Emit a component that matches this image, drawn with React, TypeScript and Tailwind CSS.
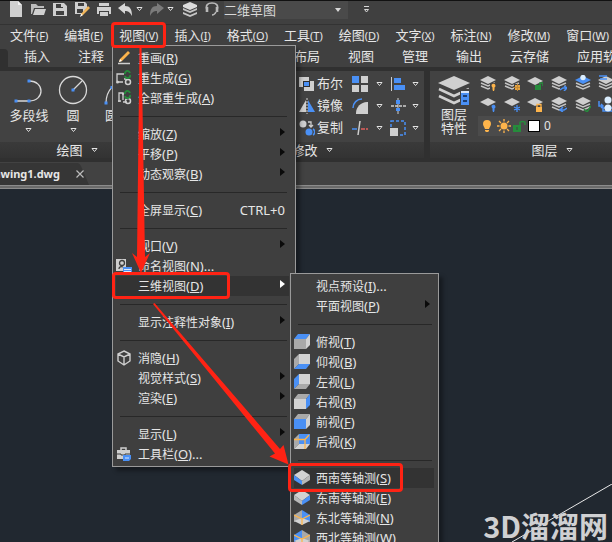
import React from 'react';

const Caret = () => <svg className="w-[7px] h-[6px] shrink-0" viewBox="0 0 7 6"><path d="M1 1.500h5L3.500 4.500z" fill="#2b2b2b" stroke="#e4e4e4" strokeWidth="1" /></svg>;

const NewIcon = () => <svg className="w-4 h-4" viewBox="0 0 16 16"><path d="M2 0h8l4 4v12H2z" fill="#cfcfcf" /><path d="M10 0v4h4z" fill="#f2f2f2" /></svg>;
const OpenIcon = () => <svg className="w-4 h-4" viewBox="0 0 16 16"><path d="M1 3h5l2 2h6v2H4L2 13H1z" fill="#bdbdbd" /><path d="M5 8h11l-2 6H3z" fill="#d0d0d0" /></svg>;
const SaveIcon = () => <svg className="w-4 h-4" viewBox="0 0 16 16"><path d="M1 2h11l3 3v10H1zM4 3v4h7V3zM4 10v4h8v-4z" fill="#cfcfcf" fillRule="evenodd" /><path d="M9 3h2v3H9z" fill="#cfcfcf" /></svg>;
const SaveAsIcon = () => (
  <svg className="w-4 h-4" viewBox="0 0 16 16">
    <path d="M1 1h10l2 2v4l-5 6H1zM4 2v3h6V2zM3 8v4h6V8z" fill="#cfcfcf" fillRule="evenodd" />
    <path d="M14 5l2 2-7 7-2 1 0-2z" fill="#f2b65a" /><path d="M7 13l2 1-3 2z" fill="#fff" />
  </svg>
);
const PrintIcon = () => <svg className="w-4 h-4" viewBox="0 0 16 16"><path d="M3 2h10v3H3zM1 6h14v7h-2v-3H3v3H1z" fill="#cfcfcf" /><path d="M4 11h8v4H4z" fill="#cfcfcf" /></svg>;
const UndoIcon = () => <svg className="w-4 h-4" viewBox="0 0 16 16"><path d="M0 7l7-5v3c5 0 7 3 7 10-2-4-4-5-7-5v3z" fill="#d6d6d6" /></svg>;
const RedoIcon = () => <svg className="w-4 h-4" viewBox="0 0 16 16"><path d="M15 7L8 2v3C3 5 1 8 1 15c2-4 4-5 7-5v3z" fill="#7b7b7b" /></svg>;
const StackIcon = () => <svg className="w-4 h-4" viewBox="0 0 16 16"><path d="M1 4l7-3 7 3v2L8 9 1 6z" fill="#dcdcdc" /><path d="M1 7l7 3 7-3v2l-7 3-7-3zM1 11l7 3 7-3v2l-7 3-7-3z" fill="#c4c4c4" /></svg>;
const HeadsetIcon = () => (
  <svg className="w-4 h-4" viewBox="0 0 16 16" fill="none" stroke="#b9b9b9" strokeWidth="1.600">
    <path d="M3 9C1 4 4 2 8 2s7 2 5 7M12 11c-1 2-2 3-4 3" /><path d="M3 6v5M13 6v5" strokeWidth="2.600" />
  </svg>
);

const Sheets = ({ fill = '#cfcfcf' }) => (
  <>
    <path d="M0 5l8-4 8 4-8 4z" fill={fill} />
    <path d="M1 8l7 3 7-3M1 11l7 3 7-3" fill="none" stroke="#c4c4c4" strokeWidth="1.500" />
  </>
);
const Sheet = () => <path d="M0 6l8-4 8 4-8 4z" fill="#cfcfcf" />;
const Bulb = ({ fill }: { fill: string }) => <path d="M11.500 11a2 2 0 1 1 3 1.500v2l-.5 1.500h-1l-.5-1.500v-2z" fill={fill} />;

const LAYER_TOOLS: { name: string; art: React.ReactNode }[] = [
  { name: '关', art: <><Sheets /><path d="M10 8h6v8h-6z" fill="#424242" /><Bulb fill="#fdb44b" /></> },
  { name: '冻结', art: <><Sheets /><path d="M10 9h6v7h-6z" fill="#424242" /><path d="M11 10h5v5h-5z" fill="#e8a33d" /><path d="M13.500 8.500v8M9.500 12.500h8" stroke="#c08a3a" /></> },
  { name: '解锁', art: <><Sheet /><path d="M8 10h6v5H8z" fill="#268c3c" /><path d="M13 10V8h3v3" fill="none" stroke="#268c3c" strokeWidth="1.500" /></> },
  { name: '置为当前', art: <><Sheets /><path d="M9 11h7v5H9z" fill="#424242" /><path d="M9 15l3-2h4M13 11l3 2-3 3" fill="none" stroke="#4a90f5" strokeWidth="1.500" /></> },
  { name: '隔离', art: <><Sheets fill="#4a90f5" /><circle cx="8" cy="2.500" r="2.700" fill="#dbeeff" /></> },
  { name: '匹配', art: <><Sheets /><path d="M1 1h8M2 4h7" stroke="#4a90f5" strokeWidth="1.500" /></> },
  { name: '开', art: <><Sheet /><Bulb fill="#4a90f5" /></> },
  { name: '解冻', art: <><Sheet /><path d="M13 9v7M10 11l6 3M16 11l-6 3" stroke="#4a90f5" strokeWidth="1.300" /></> },
  { name: '锁定', art: <><Sheet /><path d="M9 11h6v5H9z" fill="#fdb44b" /><path d="M10 11V8.500h4V11" fill="none" stroke="#fdb44b" strokeWidth="1.300" /></> },
  { name: '上一个', art: <><Sheets /><path d="M9 11h7v5H9z" fill="#424242" /><path d="M16 12l-3 2h-4M12 11l-3 3 3 2" fill="none" stroke="#4a90f5" strokeWidth="1.500" /></> },
  { name: '更改', art: <><Sheets /><path d="M9 13l3 3 4-6" fill="none" stroke="#268c3c" strokeWidth="1.500" /></> },
  { name: '复制到', art: <><path d="M1 5v5h4M3 8l2 2-2 2M5 12h10v3H5z" fill="none" stroke="#4a90f5" strokeWidth="1.500" /><circle cx="10" cy="4" r="3.500" fill="#dbeeff" /><circle cx="10" cy="12" r="3.500" fill="#dbeeff" /></> }
];

const BooleanIcon = () => <svg className="w-4 h-4" viewBox="0 0 16 16"><path d="M0 1h10v10H0z" fill="#cfcfcf" /><path d="M5 5h10v10H5z" fill="#cfcfcf" /><path d="M4 5h7v6H4z" fill="#2e2e2e" /><path d="M5 6h5v4H5z" fill="#4a90f5" /></svg>;
const MirrorIcon = () => <svg className="w-4 h-4" viewBox="0 0 16 16"><path d="M7 2v12H0z" fill="#cfcfcf" /><path d="M9 2v12h7z" fill="#4a90f5" /><path d="M8 0v16" stroke="#cfcfcf" strokeDasharray="2 1" /></svg>;
const CopyIcon = () => <svg className="w-4 h-4" viewBox="0 0 16 16"><circle cx="4" cy="4" r="3.500" fill="#cfcfcf" /><circle cx="10" cy="12" r="3.500" fill="#4a90f5" /><path d="M14 9a3.500 3.500 0 0 1 0 6" fill="none" stroke="#4a90f5" strokeWidth="1.500" /><path d="M9 2h3v4M10 5l2 2 2-2" fill="none" stroke="#cfcfcf" strokeWidth="1.300" /></svg>;
const ArrayIcon = () => <svg className="w-4 h-4" viewBox="0 0 16 16"><path d="M0 0h7v7H0z" fill="#4a90f5" /><path d="M9 0h7v7H9zM0 9h7v7H0zM9 9h7v7H9z" fill="#cfcfcf" /></svg>;
const FilletIcon = () => <svg className="w-4 h-4" viewBox="0 0 16 16"><path d="M4 16V15C4 9 9 4 15 4h1v12z" fill="#cfcfcf" /><path d="M1 10C1 5 5 1 10 1" fill="none" stroke="#4a90f5" strokeWidth="1.500" /></svg>;
const BreakIcon = () => <svg className="w-4 h-4" viewBox="0 0 16 16"><path d="M0 9h5" stroke="#4a90f5" strokeWidth="1.500" /><path d="M9 9h7" stroke="#e0605e" strokeWidth="1.500" strokeDasharray="4 1" /><path d="M8 1L6 15" stroke="#cfcfcf" strokeWidth="1.500" /></svg>;
const AlignIcon = () => <svg className="w-4 h-4" viewBox="0 0 16 16"><path d="M1.500 1v14" stroke="#cfcfcf" /><path d="M4 2h7v5H4zM4 9h11v5H4z" fill="#4a90f5" /></svg>;
const CenterIcon = () => <svg className="w-4 h-4" viewBox="0 0 16 16"><path d="M8 0v16" stroke="#cfcfcf" /><path d="M6 2h4v4H6zM6 10h4v3H6z" fill="#4a90f5" /><path d="M1 8h15" stroke="#cfcfcf" strokeWidth="1.500" strokeDasharray="3 1" /></svg>;
const ScaleIcon = () => <svg className="w-4 h-4" viewBox="0 0 16 16"><path d="M1 1h14v14H1z" fill="none" stroke="#4a90f5" strokeWidth="1.500" strokeDasharray="3 2" /><path d="M0 8h8v8H0z" fill="#cfcfcf" /></svg>;

const PencilIcon = () => <svg className="w-4 h-4" viewBox="0 0 16 16"><path d="M12 1l2 2-8 8-3 1 1-3z" fill="#fdb44b" /><path d="M3 12l1-3 2 2z" fill="#fff" /><path d="M2 13.500h12" stroke="#cfcfcf" strokeWidth="1.500" /></svg>;
const RegenIcon = () => (
  <svg className="w-4 h-4" viewBox="0 0 16 16" fill="none">
    <path d="M1 11V4h7M1 12h6M8 9h3" stroke="#cfcfcf" strokeWidth="1.300" /><circle cx="12" cy="12" r="2.500" stroke="#cfcfcf" strokeWidth="1.500" />
    <circle cx="1.500" cy="12" r="1.500" fill="#cfcfcf" /><path d="M9 4a2.500 2.500 0 0 1 5-1M14 5a2.500 2.500 0 0 1-5 1" stroke="#268c3c" strokeWidth="1.800" />
  </svg>
);
const RegenAllIcon = () => (
  <svg className="w-4 h-4" viewBox="0 0 16 16" fill="none">
    <path d="M3 12V3h4v7M6 4h2M2 11h3M7 12h4" stroke="#cfcfcf" strokeWidth="1.300" /><circle cx="12" cy="11" r="2.500" stroke="#cfcfcf" strokeWidth="1.500" />
    <path d="M9 4a2.500 2.500 0 0 1 5-1M14 5a2.500 2.500 0 0 1-5 1" stroke="#268c3c" strokeWidth="1.800" />
  </svg>
);
const NamedViewIcon = () => (
  <svg className="w-4 h-4" viewBox="0 0 16 16">
    <path d="M0 1h10v12H0z" fill="#cfcfcf" /><circle cx="6" cy="5" r="2.500" fill="none" stroke="#3d3d3d" strokeWidth="1.300" /><path d="M3 11c0-2 2-3 4-2" fill="none" stroke="#3d3d3d" strokeWidth="1.300" />
    <path d="M7 9h9v7H7z" fill="#4a90f5" /><path d="M8 11.500h7M8 13.500h7" stroke="#dce8fb" />
  </svg>
);
const CubeIcon = () => <svg className="w-4 h-4" viewBox="0 0 16 16" fill="none" stroke="#cfcfcf" strokeWidth="1.400"><path d="M8 1l6 3v7l-6 4-6-4V4zM2 4l6 3 6-3M8 7v8" /></svg>;
const ToolboxIcon = () => (
  <svg className="w-4 h-4" viewBox="0 0 16 16">
    <path d="M5 4V2h5v2" fill="none" stroke="#cfcfcf" strokeWidth="1.500" /><path d="M1 4h13v9H1z" fill="#cfcfcf" /><path d="M1 8h4v1h4V8h5" fill="none" stroke="#3d3d3d" />
    <path d="M7 9h8v4l-2 2H7z" fill="#4a90f5" /><path d="M10 11v2M12 11v2" stroke="#dce8fb" />
  </svg>
);

const LIGHT = '#d2d2d2';
const GREY = '#a9a9a9';
const BLUE = '#4a90f5';

// solid box seen from outside
const Box = ({ top = GREY, front = LIGHT, side = GREY }) => (
  <svg className="w-4 h-4" viewBox="0 0 16 16">
    <path d="M0 5l4-5h12l-4 5z" fill={top} /><path d="M0 5h12v10H0z" fill={front} /><path d="M12 5l4-5v11l-4 4z" fill={side} />
  </svg>
);
// box with the near faces removed
const OpenBox = ({ left = GREY, back = LIGHT, floor = GREY, framed = false }) => (
  <svg className="w-4 h-4" viewBox="0 0 16 16">
    <path d="M0 5l5-5v10l-5 5z" fill={left} /><path d="M5 0h11v10H5z" fill={back} /><path d="M0 15l5-5h11l-4 5z" fill={floor} />
    {framed && <path d="M0 5.500h11v9.500M11 5.500L15 1" fill="none" stroke="#fdb44b" strokeWidth="1.300" />}
  </svg>
);
const IsoBox = ({ left = '#b8b8b8', right = '#b8b8b8' }) => (
  <svg className="w-4 h-4" viewBox="0 0 16 16">
    <path d="M0 5l8-5 8 5-8 6z" fill={LIGHT} /><path d="M0 5l8 6v4L0 10z" fill={left} /><path d="M16 5l-8 6v4l8-5z" fill={right} />
  </svg>
);
const IsoFrame = ({ left = GREY, right = GREY }) => (
  <svg className="w-4 h-4" viewBox="0 0 16 16">
    <path d="M0 5l8-5v9l-8 3z" fill={left} /><path d="M16 5L8 0v9l8 3z" fill={right} /><path d="M0 11l8-3 8 3-8 4z" fill={LIGHT} />
    <path d="M0 5l8 4 8-4M8 9v6" fill="none" stroke="#fdb44b" strokeWidth="1.300" />
  </svg>
);

interface Entry {
  label: string;
  hotkey: string;
  tail?: string;
  icon?: React.ReactNode;
  shortcut?: string;
  more?: boolean;
  active?: boolean;
}

const MENU_BAR: [string, string][] = [
  ['文件', 'F'], ['编辑', 'E'], ['视图', 'V'], ['插入', 'I'], ['格式', 'O'], ['工具', 'T'],
  ['绘图', 'D'], ['文字', 'X'], ['标注', 'N'], ['修改', 'M'], ['窗口', 'W']
];

const VIEW_MENU: Entry[][] = [
  [
    { label: '重画', hotkey: 'R', icon: <PencilIcon /> },
    { label: '重生成', hotkey: 'G', icon: <RegenIcon /> },
    { label: '全部重生成', hotkey: 'A', icon: <RegenAllIcon /> }
  ],
  [
    { label: '缩放', hotkey: 'Z', more: true },
    { label: '平移', hotkey: 'P', more: true },
    { label: '动态观察', hotkey: 'B', more: true }
  ],
  [{ label: '全屏显示', hotkey: 'C', shortcut: 'CTRL+0' }],
  [
    { label: '视口', hotkey: 'V', more: true },
    { label: '命名视图', hotkey: 'N', tail: '...', icon: <NamedViewIcon /> },
    { label: '三维视图', hotkey: 'D', more: true, active: true }
  ],
  [{ label: '显示注释性对象', hotkey: 'I', more: true }],
  [
    { label: '消隐', hotkey: 'H', icon: <CubeIcon /> },
    { label: '视觉样式', hotkey: 'S', more: true },
    { label: '渲染', hotkey: 'E', more: true }
  ],
  [
    { label: '显示', hotkey: 'L', more: true },
    { label: '工具栏', hotkey: 'O', tail: '...', icon: <ToolboxIcon /> }
  ]
];

const VIEW_3D_MENU: Entry[][] = [
  [
    { label: '视点预设', hotkey: 'I', tail: '...' },
    { label: '平面视图', hotkey: 'P', more: true }
  ],
  [
    { label: '俯视', hotkey: 'T', icon: <Box top={BLUE} front={GREY} side={LIGHT} /> },
    { label: '仰视', hotkey: 'B', icon: <OpenBox floor={BLUE} /> },
    { label: '左视', hotkey: 'L', icon: <OpenBox left={BLUE} /> },
    { label: '右视', hotkey: 'R', icon: <Box side={BLUE} /> },
    { label: '前视', hotkey: 'F', icon: <Box front={BLUE} side={LIGHT} /> },
    { label: '后视', hotkey: 'K', icon: <OpenBox back={BLUE} floor={LIGHT} framed /> }
  ],
  [
    { label: '西南等轴测', hotkey: 'S', icon: <IsoBox left={BLUE} />, active: true },
    { label: '东南等轴测', hotkey: 'E', icon: <IsoBox right={BLUE} /> },
    { label: '东北等轴测', hotkey: 'N', icon: <IsoFrame right={BLUE} /> },
    { label: '西北等轴测', hotkey: 'W', icon: <IsoFrame left={BLUE} /> }
  ]
];

const MenuRow = ({ entry }: { entry: Entry }) => (
  <button className={`flex w-full h-5 items-center pr-1 whitespace-nowrap ${entry.active ? 'bg-[#333333]' : ''}`}>
    <span className="w-[22px] h-4 shrink-0">{entry.icon}</span>
    <span>{entry.label}<span className="text-[13px]">(<u>{entry.hotkey}</u>){entry.tail}</span></span>
    <span className="flex-1" />
    {entry.shortcut && <span className="text-[13px]">{entry.shortcut}</span>}
    {entry.more && <svg className="w-[5px] h-2 -mt-1" viewBox="0 0 5 8"><path d="M0 0l5 4-5 4z" fill={entry.active ? '#ffffff' : '#0a0a0a'} /></svg>}
  </button>
);

const MenuPanel = ({ groups }: { groups: Entry[][] }) => (
  <>
    {groups.map((group, i) => (
      <div key={i}>
        {i > 0 && <div className="h-4 pl-1 pr-0.5 flex items-center"><div className="h-px w-full bg-[#282828]" /></div>}
        {group.map(entry => <MenuRow key={entry.label} entry={entry} />)}
      </div>
    ))}
  </>
);

const DrawTool = ({ label, children }: { label: string; children: React.ReactNode }) => (
  <button className="flex flex-col items-center text-[13px] leading-4 whitespace-nowrap">
    <svg className="w-8 h-8" viewBox="0 0 32 32" fill="none" stroke="#d8d8d8" strokeWidth="1.300">{children}</svg>
    {label}
    <span className="mt-1"><Caret /></span>
  </button>
);

const PanelTitle = ({ children }: { children: React.ReactNode }) => (
  <div className="flex h-4 items-center justify-center gap-2 bg-linear-to-b from-[#3a3a3a] to-[#333333] text-[13px] leading-4">{children}<Caret /></div>
);

const MODIFY_ROWS = [
  { label: '布尔', icon: <BooleanIcon />, mid: <ArrayIcon />, end: <AlignIcon /> },
  { label: '镜像', icon: <MirrorIcon />, mid: <FilletIcon />, end: <CenterIcon /> },
  { label: '复制', icon: <CopyIcon />, mid: <BreakIcon />, end: <ScaleIcon /> }
];

const App: React.FC = () => {
  return (
    <div className="relative flex flex-col h-screen overflow-hidden bg-[#212830] text-[#e6e6e6] text-[12px] leading-4 font-['Noto_Sans','Noto_Sans_CJK_SC',sans-serif]">

      {/* QUICK ACCESS */}
      <header className="flex h-[25px] shrink-0 items-start border-t border-t-[#111111] border-b border-b-[#333333] bg-[#404040] pl-2">
        <div className="flex items-center gap-[6px]">
          <button aria-label="新建"><NewIcon /></button>
          <button aria-label="打开"><OpenIcon /></button>
          <button aria-label="保存"><SaveIcon /></button>
          <button aria-label="另存为"><SaveAsIcon /></button>
          <button aria-label="打印"><PrintIcon /></button>
          <button className="flex items-center gap-0.5" aria-label="放弃"><UndoIcon /><Caret /></button>
          <button className="flex items-center gap-0.5" aria-label="重做"><RedoIcon /><Caret /></button>
          <button className="ml-0.5" aria-label="图层"><StackIcon /></button>
          <button aria-label="支持"><HeadsetIcon /></button>
        </div>
        <div className="relative ml-1 w-[124px]">
          <select aria-label="工作空间" className="block w-full h-[18px] appearance-none bg-[#4a4a4a] text-[13px] leading-4 text-[#d8d8d8]">
            <option>二维草图</option>
          </select>
          <svg className="absolute right-[7px] top-[7px] w-[6px] h-1" viewBox="0 0 6 4"><path d="M0 0h6L3 4z" fill="#d8d8d8" /></svg>
        </div>
        <svg className="ml-[15px] mt-1 w-[7px] h-2" viewBox="0 0 7 8"><path d="M1 1.500h5M1.500 4.500h4L3.500 7z" fill="none" stroke="#d8d8d8" /></svg>
      </header>

      {/* MENU BAR */}
      <nav className="flex h-5 shrink-0 items-center gap-4 bg-[#404040] pl-[10px] text-[13px] whitespace-nowrap">
        {MENU_BAR.map(([label, key]) => (
          <button key={key} className="shrink-0">{label}<span className="text-[11px]">(<u>{key}</u>)</span></button>
        ))}
      </nav>

      {/* RIBBON TABS */}
      <div className="flex h-[22px] shrink-0 items-center gap-7 bg-[#404040] text-[13px] whitespace-nowrap">
        <span className="-mr-3 h-[18px] w-2 shrink-0 self-end rounded-tr-sm bg-[#303030]" />
        <button className="shrink-0">插入</button>
        <button className="shrink-0">注释</button>
        <span className="w-[134px] shrink-0" />
        {['布局', '视图', '管理', '输出', '云存储', '应用软件'].map(tab => <button key={tab} className="shrink-0">{tab}</button>)}
      </div>

      {/* RIBBON */}
      <div className="flex shrink-0 border-y-4 border-[#303030] bg-[#303030]">
        <section className="w-[154px] shrink-0 bg-[#424242]">
          <div className="flex h-[71px] items-start pt-1">
            <div className="flex w-[58px] justify-center">
              <DrawTool label="多段线">
                <path d="M16 6c16 0 16 20 0 20H3" /><path d="M14.500 4.500h3v3h-3zM1.500 24.500h3v3h-3zM14.500 24.500h3v3h-3z" fill="#4a90f5" stroke="none" />
              </DrawTool>
            </div>
            <div className="flex w-[30px] justify-center">
              <DrawTool label="圆">
                <circle cx="16" cy="15" r="13.500" /><path d="M16 15l9-9" /><path d="M14.500 13.500h3v3h-3z" fill="#4a90f5" stroke="none" />
              </DrawTool>
            </div>
            <div className="flex w-[60px] justify-center">
              <DrawTool label="圆弧">
                <path d="M4 28C4 16 12 6 26 5" /><path d="M2.500 26.500h3v3h-3zM8.500 11h3v3h-3z" fill="#4a90f5" stroke="none" />
              </DrawTool>
            </div>
          </div>
          <PanelTitle>绘图</PanelTitle>
        </section>

        <section className="ml-[46px] w-[224px] shrink-0 bg-[#424242]">
          <div className="flex h-[71px] flex-col items-end gap-[5px] pt-1 pr-[5px]">
            {MODIFY_ROWS.map(row => (
              <div key={row.label} className="flex items-center">
                <button className="flex items-center gap-0.5 text-[13px] leading-[17px]">{row.icon}{row.label}</button>
                <button className="ml-[9px] flex items-center gap-2" aria-label={`${row.label}工具`}>{row.mid}<Caret /></button>
                <button className="ml-[7px] flex items-center gap-1.5" aria-label={`${row.label}选项`}>{row.end}<Caret /></button>
              </div>
            ))}
          </div>
          <PanelTitle>修改</PanelTitle>
        </section>

        <section className="ml-[6px] w-[244px] shrink-0 bg-[#424242]">
          <div className="flex h-[71px] gap-2 pt-1 pl-2">
            <button className="flex w-8 flex-col items-center text-[13px] leading-[14px]">
              <svg className="w-8 h-8" viewBox="0 0 32 32">
                <path d="M0 8l16-7 16 7-16 7z" fill="#cfcfcf" />
                <path d="M1 14l15 7 15-7M1 21l15 7 15-7" fill="none" stroke="#cfcfcf" strokeWidth="2.500" />
                <path d="M22 14h10v17H22z" fill="#424242" /><path d="M23 16h8v14h-8z" fill="#4a90f5" /><path d="M23 16h8v2h-8z" fill="#d8e6fb" /><path d="M25 21h4M25 26h4" stroke="#1d3f73" strokeWidth="2" />
              </svg>
              图层<br />特性
            </button>
            <div className="flex-1">
              <div className="grid w-[144px] grid-cols-6 gap-y-[5px] pl-0.5">
                {LAYER_TOOLS.map(tool => (
                  <button key={tool.name} aria-label={tool.name}><svg className="w-4 h-4" viewBox="0 0 16 16">{tool.art}</svg></button>
                ))}
              </div>
              <button className="mt-1 flex h-5 w-full items-center bg-[#4b4b4b] pl-0.5 text-[12px]">
                <svg className="w-4 h-4" viewBox="0 0 16 16"><path d="M3 6a4 4 0 1 1 8 0c0 2-1.500 3-2 5H5C4.500 9 3 8 3 6z" fill="#fdb44b" /><path d="M5 12h4v1l-1 1H6l-1-1z" fill="#fdb44b" /></svg>
                <svg className="w-4 h-4" viewBox="0 0 16 16"><circle cx="8" cy="8" r="3.500" fill="#fdb44b" /><path d="M8 1v2.500M8 12.500V15M1 8h2.500M12.500 8H15M3 3l2 2M11 11l2 2M3 13l2-2M11 5l2-2" stroke="#fdb44b" strokeWidth="1.300" /></svg>
                <svg className="w-4 h-4" viewBox="0 0 16 16"><path d="M1 7h8v7H1z" fill="#268c3c" /><path d="M8 7V4.500C8 3 13 3 13 4.500V7" fill="none" stroke="#268c3c" strokeWidth="1.500" /><path d="M4.500 9h1v3h-1z" fill="#424242" /></svg>
                <span className="mr-1 h-3 w-3 border border-black bg-white" />
                0
              </button>
            </div>
          </div>
          <PanelTitle>图层</PanelTitle>
        </section>
      </div>

      {/* DRAWING TABS */}
      <div className="flex h-[23px] shrink-0 items-stretch bg-[#424242]">
        <div className="relative flex w-[90px] items-center">
          <svg className="absolute inset-0 h-full w-full" viewBox="0 0 90 22" preserveAspectRatio="none"><path d="M0 1h77q3 0 5 5l7 16H0z" fill="#363636" /></svg>
          <span className="relative flex w-[60px] justify-end overflow-hidden text-[11px] font-bold">awing1.dwg</span>
          <button className="relative ml-4" aria-label="关闭">
            <svg className="w-2 h-2" viewBox="0 0 8 8"><path d="M0.500 0.500l7 7M7.500 0.500l-7 7" stroke="#bcbcbc" strokeWidth="1.200" /></svg>
          </button>
        </div>
      </div>
      <div className="h-1 shrink-0 border-y border-[#8b8b8b] bg-[#6a6a6a]" />

      {/* MODEL SPACE */}
      <main className="relative flex-1">
        <svg className="absolute bottom-0 right-0 w-[100px] h-[58px]" viewBox="0 0 100 58"><path d="M0 58L100 0" stroke="#e8e8e8" /></svg>
        <div className="absolute bottom-0 right-1 text-[29px] leading-[34px] font-bold text-[#cfd0d2] font-['Noto_Sans_CJK_SC',sans-serif]">3D溜溜网</div>
      </main>

      {/* OPEN MENUS */}
      <div className="absolute left-[112px] top-[45px] w-[184px] border border-[#9a9a9a] bg-[#3f3f3f] pl-[3px] pr-1.5 py-0.5 shadow-[4px_4px_4px_rgba(0,0,0,0.35)]">
        <MenuPanel groups={VIEW_MENU} />
      </div>
      <div className="absolute left-[290px] top-[273px] w-[149px] border border-[#9a9a9a] bg-[#3f3f3f] pl-[3px] pr-1 py-0.5 shadow-[4px_4px_4px_rgba(0,0,0,0.35)]">
        <MenuPanel groups={VIEW_3D_MENU} />
      </div>

      {/* TUTORIAL MARKS */}
      <div className="absolute left-[111px] top-[22px] h-[26px] w-[55px] rounded-sm border-3 border-[#ff2314]" />
      <div className="absolute left-[112px] top-[272px] h-[27px] w-[118px] rounded-sm border-3 border-[#ff2314]" />
      <div className="absolute left-[288px] top-[463px] h-[29px] w-[115px] rounded-sm border-3 border-[#ff2314]" />
      <svg className="pointer-events-none absolute left-0 top-0 w-[612px] h-[542px]" viewBox="0 0 612 542" fill="#ff2314">
        <path d="M139.500 46h2l3.500 211 5-4-9 20-9-20 5 4z" />
        <path d="M153 304l1.500-1L280 449l3.500-4 5 19.500-19-8 5.500-3z" />
      </svg>
    </div>
  );
};

export default App;
